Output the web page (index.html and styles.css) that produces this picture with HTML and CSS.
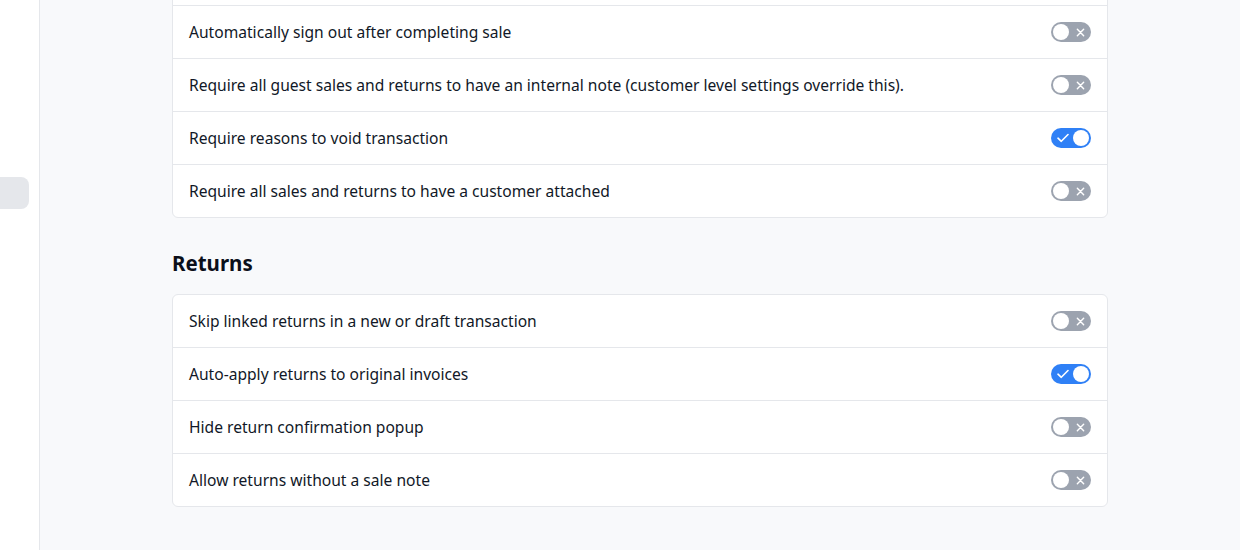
FILE: index.html
```html
<!DOCTYPE html>
<html lang="en">
<head>
    <meta charset="UTF-8">
    <title>Settings</title>
    <link rel="stylesheet" href="styles.css">
</head>
<body>
    <div class="layout">
        <aside class="sidebar">
            <div class="nav-pill"></div>
        </aside>

        <main class="main">
            <div class="content">
                <div class="card">
                    <div class="row row-hidden"></div>
                    <div class="row">
                        <span>Automatically sign out after completing sale</span>
                        <span class="toggle"><span class="knob"></span><svg class="mark" viewBox="0 0 10 10"><path d="M1.5 1.5 L8.5 8.5 M8.5 1.5 L1.5 8.5"/></svg></span>
                    </div>
                    <div class="row">
                        <span>Require all guest sales and returns to have an internal note (customer level settings override this).</span>
                        <span class="toggle"><span class="knob"></span><svg class="mark" viewBox="0 0 10 10"><path d="M1.5 1.5 L8.5 8.5 M8.5 1.5 L1.5 8.5"/></svg></span>
                    </div>
                    <div class="row">
                        <span>Require reasons to void transaction</span>
                        <span class="toggle on"><svg class="mark" viewBox="0 0 12 10"><path d="M1 5.2 L4.3 8.3 L11 1.5"/></svg><span class="knob"></span></span>
                    </div>
                    <div class="row">
                        <span>Require all sales and returns to have a customer attached</span>
                        <span class="toggle"><span class="knob"></span><svg class="mark" viewBox="0 0 10 10"><path d="M1.5 1.5 L8.5 8.5 M8.5 1.5 L1.5 8.5"/></svg></span>
                    </div>
                </div>

                <h2 class="section-title">Returns</h2>

                <div class="card">
                    <div class="row">
                        <span>Skip linked returns in a new or draft transaction</span>
                        <span class="toggle"><span class="knob"></span><svg class="mark" viewBox="0 0 10 10"><path d="M1.5 1.5 L8.5 8.5 M8.5 1.5 L1.5 8.5"/></svg></span>
                    </div>
                    <div class="row">
                        <span>Auto-apply returns to original invoices</span>
                        <span class="toggle on"><svg class="mark" viewBox="0 0 12 10"><path d="M1 5.2 L4.3 8.3 L11 1.5"/></svg><span class="knob"></span></span>
                    </div>
                    <div class="row">
                        <span>Hide return confirmation popup</span>
                        <span class="toggle"><span class="knob"></span><svg class="mark" viewBox="0 0 10 10"><path d="M1.5 1.5 L8.5 8.5 M8.5 1.5 L1.5 8.5"/></svg></span>
                    </div>
                    <div class="row">
                        <span>Allow returns without a sale note</span>
                        <span class="toggle"><span class="knob"></span><svg class="mark" viewBox="0 0 10 10"><path d="M1.5 1.5 L8.5 8.5 M8.5 1.5 L1.5 8.5"/></svg></span>
                    </div>
                </div>
            </div>
        </main>
    </div>
</body>
</html>
```

FILE: styles.css
```css
body {
    margin: 0;
    font-family: "Noto Sans", "Liberation Sans", sans-serif;
    color: #111827;
    background-color: #f8f9fb;
}
.layout {
    display: flex;
    height: 550px;
    overflow: hidden;
}
.sidebar {
    width: 39px;
    flex-shrink: 0;
    background-color: #fff;
    border-right: 1px solid #e5e7eb;
    padding-top: 177px;
}
.nav-pill {
    width: 29px;
    height: 32px;
    background-color: #e5e7eb;
    border-radius: 0 8px 8px 0;
}
.main {
    flex: 1;
    overflow: hidden;
}
.content {
    width: 936px;
    margin-left: 132px;
    margin-top: -48px;
}
.card {
    background-color: #fff;
    border: 1px solid #e5e7eb;
    border-radius: 6px;
}
.row {
    display: flex;
    justify-content: space-between;
    align-items: center;
    height: 52px;
    padding: 0 16px;
    font-size: 15.6px;
    border-top: 1px solid #e5e7eb;
}
.row:first-child {
    border-top: none;
}
.section-title {
    margin: 0;
    padding: 31px 0 17px;
    font-size: 20.5px;
    font-weight: 700;
    line-height: 28px;
    color: #0b0f19;
}
.toggle {
    display: flex;
    align-items: center;
    justify-content: space-between;
    box-sizing: border-box;
    width: 40px;
    height: 20px;
    padding: 0 2px;
    border-radius: 10px;
    background-color: #9ca3af;
}
.toggle .knob {
    width: 16px;
    height: 16px;
    border-radius: 50%;
    background-color: #fff;
}
.toggle .mark {
    width: 9px;
    height: 9px;
    margin-right: 4px;
    fill: none;
    stroke: #fff;
    stroke-width: 1.6;
    stroke-linecap: round;
    stroke-linejoin: round;
}
.toggle.on {
    background-color: #2f80f6;
}
.toggle.on .mark {
    width: 12px;
    height: 10px;
    margin: 0 0 0 4px;
}
```
